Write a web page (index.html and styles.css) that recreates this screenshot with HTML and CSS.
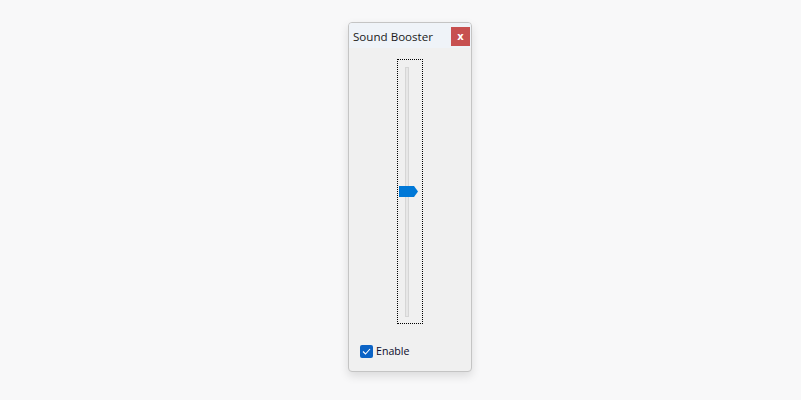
FILE: index.html
```html
<!DOCTYPE html>
<html>
<head>
<meta charset="utf-8">
<link rel="stylesheet" href="styles.css">
</head>
<body>
<div class="window">
  <div class="titlebar">
    <span class="title">Sound Booster</span>
    <button class="close">x</button>
  </div>
  <div class="content">
    <div class="slider-wrap">
      <div class="focus">
        <div class="track"></div>
        <svg class="thumb" width="19" height="11" viewBox="0 0 19 11"><path d="M0 0 H15 L19 5.5 L15 11 H0 Z" fill="#0078d7"/></svg>
      </div>
    </div>
    <label class="check">
      <span class="box"><svg width="9" height="7" viewBox="0 0 9 7"><path d="M1 3.5 L3.5 6 L8 1" fill="none" stroke="#fff" stroke-width="1.1"/></svg></span>
      <span class="label">Enable</span>
    </label>
  </div>
</div>
</body>
</html>
```
FILE: styles.css
```css
html, body { margin: 0; padding: 0; }
body {
  background: #f8f8f9;
  width: 801px;
  height: 400px;
  overflow: hidden;
  font-family: "Open Sans", "Noto Sans", sans-serif;
}
.window {
  box-sizing: border-box;
  margin: 22px 0 0 348px;
  width: 124px;
  height: 350px;
  border: 1px solid #c4c4c4;
  border-radius: 4px;
  background: #f0f0f0;
  box-shadow: 0 4px 10px rgba(0,0,0,0.12);
  display: flex;
  flex-direction: column;
  overflow: hidden;
}
.titlebar {
  height: 25px;
  background: #eff3f8;
  display: flex;
  align-items: center;
  justify-content: space-between;
  padding: 0 1px 0 4px;
}
.title {
  font-size: 11.6px;
  color: #1a1a1a;
  margin-top: 1px;
}
.close {
  width: 19px;
  height: 19px;
  margin-top: 2px;
  border: none;
  background: #c75050;
  color: #fff;
  font-family: "DejaVu Sans", sans-serif;
  font-weight: bold;
  font-size: 10px;
  line-height: 17px;
  padding: 0;
}
.content {
  flex: 1;
  display: flex;
  flex-direction: column;
}
.slider-wrap {
  display: flex;
  padding: 11px 0 0 48px;
}
.focus {
  box-sizing: border-box;
  width: 26px;
  height: 265px;
  border: 1px dotted #000;
  position: relative;
  display: flex;
  padding: 7px 0 0 7px;
}
.track {
  box-sizing: border-box;
  width: 4px;
  height: 250px;
  background: #e7e7e7;
  border: 1px solid #d6d6d6;
}
.thumb {
  position: absolute;
  left: 1px;
  top: 126px;
}
.check {
  display: flex;
  align-items: center;
  margin: 20px 0 0 11px;
}
.box {
  width: 13px;
  height: 13px;
  border-radius: 2px;
  background: #0b63c5;
  display: flex;
  align-items: center;
  justify-content: center;
}
.label {
  font-size: 10.6px;
  color: #0a0a2a;
  margin-left: 3px;
}
```
